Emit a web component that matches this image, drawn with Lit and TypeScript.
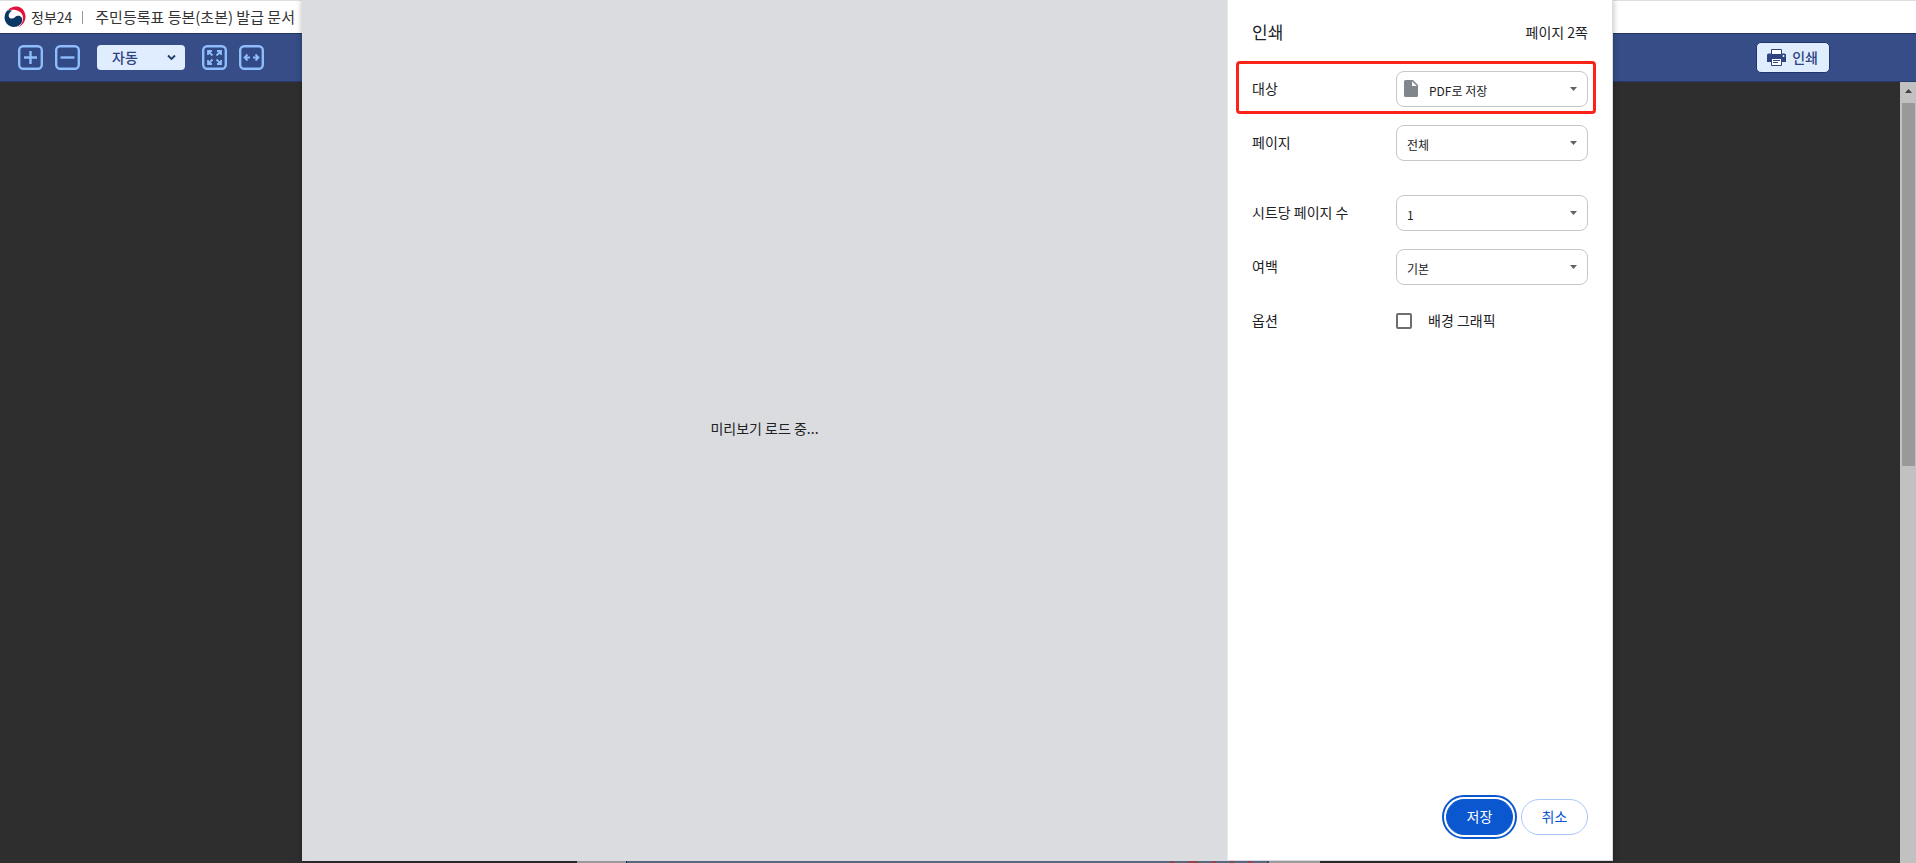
import { LitElement, html, css, svg } from "lit";
import { customElement, property } from "lit/decorators.js";

const sharedText = css`
  :host, * { box-sizing: border-box; }
  button, select, input {
    font: inherit;
    color: inherit;
    margin: 0;
  }
`;

@customElement("doc-header")
class DocHeader extends LitElement {
  static styles = [
    sharedText,
    css`
      :host {
        display: flex;
        align-items: center;
        height: 33px;
        padding: 0 4px;
        border-top: 1px solid #dedede;
        background: #fff;
        color: #333;
        white-space: nowrap;
        line-height: 20px;
      }
      .logo { width: 22px; height: 22px; margin-right: 5px; }
      .brand { font-size: 14px; }
      .divider { width: 1px; height: 13px; margin: 0 12px 0 10px; background: #999; }
      .title { font-size: 15px; font-weight: inherit; margin: 0; }
    `,
  ];

  render() {
    return html`
      <svg class="logo" viewBox="0 0 22 22" aria-hidden="true">
        <path fill="#e5123d" d="M4 4.200C6.500 1.200 10.500-.1 14.300.8c4.300 1.100 7.200 5.200 7.200 9.800 0 5.200-3.200 9.300-7.800 10.900 3.200-2.200 5.300-5.300 5.300-9 0-3.200-1.700-5.900-4.400-7.300C11.200 3.400 7.300 3.300 4 4.200z" />
        <path fill="#fff" d="M7.200 5.200c3.500-1.500 7.500-.9 9.800 1.800 1 1.200 1.700 2.700 1.900 4.200-1.900-3.300-5.900-3.500-8.400-1.300-1.900 1.700-4 1.600-5 .5-1.100-1.300-.6-3.900 1.700-5.200z" />
        <path fill="#0b3765" d="M3.300 4.500C-.3 8.500-.3 14.300 3.100 18c3.400 3.700 9.100 4 12.700.8 2.700-2.400 3.200-5.800 1.400-7.700-1.800-1.900-4.500-1.400-6.200.1-2.100 1.900-5 1.700-6-.3C4.100 9 5.200 6.200 8 4.700 6.500 4.100 4.900 4.100 3.300 4.500z" />
      </svg>
      <span class="brand">정부24</span>
      <span class="divider"></span>
      <h1 class="title">주민등록표 등본(초본) 발급 문서</h1>
    `;
  }
}

@customElement("viewer-toolbar")
class ViewerToolbar extends LitElement {
  static styles = [
    sharedText,
    css`
      :host {
        display: flex;
        align-items: center;
        justify-content: space-between;
        height: 49px;
        padding: 0 86px 0 18px;
        background: #364d87;
        border-top: 1px solid #213462;
        border-bottom: 1px solid #263a70;
        color: #2d4480;
      }
      .tools { display: flex; align-items: center; gap: 12px; }
      .tool {
        display: block;
        width: 25px;
        height: 25px;
        padding: 0;
        border: 0;
        background: none;
      }
      .tool svg { display: block; }
      .zoom { position: relative; margin: 0 5px; }
      .zoom select {
        display: block;
        appearance: none;
        width: 88px;
        height: 25px;
        padding: 0 24px 2px 15px;
        border: 0;
        border-radius: 4px;
        background: #e0edff;
        font-size: 14px;
        font-weight: 500;
      }
      .zoom svg { position: absolute; right: 9px; top: 9px; pointer-events: none; }
      .print {
        display: flex;
        align-items: center;
        gap: 6px;
        height: 31px;
        padding: 0 11px 1px 10px;
        border: 1px solid #20356b;
        border-radius: 5px;
        background: #e0edff;
        font-size: 14px;
        font-weight: 500;
      }
    `,
  ];

  private tool(label: string, glyph: unknown) {
    return html`<button class="tool" type="button" aria-label=${label}>
      <svg width="25" height="25" viewBox="0 0 25 25" fill="none" stroke="#8fbcfb" stroke-width="2">
        <rect x="1.200" y="1.200" width="22.600" height="22.600" rx="4" stroke-width="2.400" fill="#314984" />
        ${glyph}
      </svg>
    </button>`;
  }

  render() {
    return html`
      <div class="tools">
        ${this.tool("확대", svg`<path stroke-width="2.400" d="M12.500 6v13M6 12.500h13" />`)}
        ${this.tool("축소", svg`<path stroke-width="2.400" d="M5.500 12.500h14" />`)}
        <div class="zoom">
          <select aria-label="배율"><option>자동</option></select>
          <svg width="9" height="7" viewBox="0 0 9 7" fill="none" stroke="#1f3d68" stroke-width="1.800"><path d="M1 1.500l3.500 3.500L8 1.500" /></svg>
        </div>
        ${this.tool("전체 화면", svg`<path stroke-width="1.800" d="M6 10V6h4M6 6l4.500 4.500M15 6h4v4M19 6l-4.500 4.500M6 15v4h4M6 19l4.500-4.500M15 19h4v-4M19 19l-4.500-4.500" />`)}
        ${this.tool("너비 맞춤", svg`<path stroke-width="1.800" d="M11 12.500H5.500M8.500 9.500l-3 3 3 3M14 12.500h5.500M16.500 9.500l3 3-3 3" />`)}
      </div>
      <button class="print" type="button">
        <svg width="19" height="17" viewBox="0 0 19 17" aria-hidden="true">
          <path fill="#fff" stroke="#2d4480" d="M4.500.5h10v5h-10z" />
          <path fill="#2d4480" d="M1.500 4.500H4V5.500h11V4.500h2.500A1.500 1.500 0 0 1 19 6v7h-4v-3H4v3H0V6a1.500 1.500 0 0 1 1.500-1.500z" />
          <circle cx="16.500" cy="7" r="1" fill="#fff" />
          <path fill="#fff" stroke="#2d4480" d="M4.500 9.500h10v7h-10z" />
          <path stroke="#2d4480" d="M6 11.500h7M6 13.500h5" />
        </svg>
        인쇄
      </button>
    `;
  }
}

@customElement("document-viewport")
class DocumentViewport extends LitElement {
  static styles = [
    sharedText,
    css`
      :host { display: flex; background: #2e2e2e; }
      .canvas {
        flex: 1;
        display: flex;
        align-items: flex-end;
        justify-content: center;
        padding-right: 3px;
      }
      .page {
        width: 743px;
        height: 2px;
        display: flex;
        background: #aeaeae;
        padding: 0 51px 0 49px;
      }
      .sheet {
        flex: 1;
        display: flex;
        justify-content: flex-end;
        gap: 14px;
        padding-right: 15px;
        background: #66758f;
        border-left: 1px solid #1c2c60;
        border-right: 2px solid #4a5878;
      }
      .seal { width: 4px; background: #a35058; }
      .seal.wide { width: 10px; }
      .scrollbar {
        width: 16px;
        padding: 0 1px 0 2px;
        background: #c1c1c1;
      }
      .up { display: block; width: 13px; height: 21px; }
      .thumb { height: 363px; background: #999; }
    `,
  ];

  render() {
    return html`
      <div class="canvas">
        <div class="page">
          <div class="sheet">
            <span class="seal"></span><span class="seal wide"></span><span class="seal"></span>
            <span class="seal"></span><span class="seal"></span>
          </div>
        </div>
      </div>
      <div class="scrollbar">
        <svg class="up" viewBox="0 0 13 21" aria-hidden="true"><path fill="#404040" d="M3 11l3.500-4L10 11z" /></svg>
        <div class="thumb"></div>
      </div>
    `;
  }
}

@customElement("setting-select")
class SettingSelect extends LitElement {
  @property() label = "";
  @property() value = "";
  @property({ type: Boolean }) file = false;

  static styles = [
    sharedText,
    css`
      :host { display: block; }
      .row { display: grid; grid-template-columns: 1fr 192px; align-items: center; }
      label { padding-bottom: 2px; }
      .field { position: relative; }
      select {
        display: block;
        appearance: none;
        width: 100%;
        height: 36px;
        padding: 3px 28px 0 10px;
        border: 1px solid #c7c7c7;
        border-radius: 8px;
        background: #fff;
        font-size: 12px;
        color: #202124;
      }
      .with-file select { padding-left: 32px; }
      .arrow { position: absolute; right: 11px; top: 16px; pointer-events: none; }
      .file { position: absolute; left: 8px; top: 9px; pointer-events: none; }
    `,
  ];

  render() {
    return html`
      <div class="row">
        <label for="control">${this.label}</label>
        <div class="field ${this.file ? "with-file" : ""}">
          <select id="control"><option>${this.value}</option></select>
          ${this.file
            ? html`<svg class="file" width="14" height="17" viewBox="0 0 14 17">
                <path fill="#80868b" d="M1.500 0H9l5 5v10.500a1.500 1.500 0 0 1-1.500 1.500h-11A1.500 1.500 0 0 1 0 15.500v-14A1.500 1.500 0 0 1 1.500 0z" />
                <path fill="#fff" d="M8 1.200V6h4.800z" />
              </svg>`
            : ""}
          <svg class="arrow" width="7" height="4" viewBox="0 0 7 4"><path fill="#5f6368" d="M0 0h7L3.500 4z" /></svg>
        </div>
      </div>
    `;
  }
}

@customElement("print-dialog")
class PrintDialog extends LitElement {
  static styles = [
    sharedText,
    css`
      :host {
        display: grid;
        grid-template-columns: 1fr 386px;
        background: #fff;
        color: #202124;
        font-size: 14px;
        line-height: 20px;
        box-shadow: 0 0 6px rgba(0, 0, 0, 0.3);
      }
      .preview {
        display: flex;
        align-items: center;
        justify-content: center;
        padding-bottom: 6px;
        background: #dadce0;
      }
      .preview p { margin: 0; }
      .panel {
        display: flex;
        flex-direction: column;
        padding: 22px 24px 25px;
        border-left: 1px solid #e8e8ea;
        border-right: 1px solid #dadce0;
        border-bottom: 1px solid #dadce0;
      }
      .head { display: flex; align-items: center; justify-content: space-between; height: 20px; }
      .head h2 { margin: 0; font-size: 17px; font-weight: inherit; }
      .highlight {
        margin: 19px -8px 11px -16px;
        padding: 7px 5px 4px 13px;
        border: 3px solid #fb2418;
        border-radius: 4px;
      }
      .settings { display: grid; gap: 18px; }
      .group { padding-top: 16px; }
      .options { display: grid; grid-template-columns: 1fr 192px; align-items: center; height: 36px; }
      .options span { padding-bottom: 2px; }
      .check { display: flex; align-items: center; gap: 16px; }
      .check input {
        appearance: none;
        width: 16px;
        height: 16px;
        border: 2px solid #6e6e6e;
        border-radius: 2px;
      }
      .actions { display: flex; justify-content: flex-end; gap: 8px; margin-top: auto; }
      .actions button {
        width: 67px;
        height: 36px;
        padding: 0 0 2px;
        border: 1px solid #a8c7fa;
        border-radius: 18px;
        background: #fff;
        color: #0b57d0;
      }
      .actions .save {
        border-color: #0b57d0;
        background: #0b57d0;
        color: #fff;
        outline: 2px solid #0b57d0;
        outline-offset: 2px;
      }
    `,
  ];

  render() {
    return html`
      <section class="preview"><p>미리보기 로드 중...</p></section>
      <section class="panel">
        <div class="head"><h2>인쇄</h2><span>페이지 2쪽</span></div>
        <div class="highlight"><setting-select label="대상" value="PDF로 저장" file></setting-select></div>
        <div class="settings">
          <setting-select label="페이지" value="전체"></setting-select>
          <setting-select class="group" label="시트당 페이지 수" value="1"></setting-select>
          <setting-select label="여백" value="기본"></setting-select>
          <div class="options">
            <span>옵션</span>
            <label class="check"><input type="checkbox" /><span>배경 그래픽</span></label>
          </div>
        </div>
        <div class="actions">
          <button class="save" type="button">저장</button>
          <button type="button">취소</button>
        </div>
      </section>
    `;
  }
}

@customElement("app-root")
class AppRoot extends LitElement {
  static styles = css`
    :host {
      display: grid;
      grid-template-rows: auto auto 1fr;
      position: relative;
      min-height: 100vh;
      font-family: "Noto Sans CJK KR", sans-serif;
      overflow: hidden;
    }
    .overlay {
      position: absolute;
      inset: 0;
      display: grid;
      padding: 0 303px 2px 302px;
    }
  `;

  render() {
    return html`
      <doc-header></doc-header>
      <viewer-toolbar></viewer-toolbar>
      <document-viewport></document-viewport>
      <div class="overlay"><print-dialog role="dialog" aria-label="인쇄"></print-dialog></div>
    `;
  }
}
